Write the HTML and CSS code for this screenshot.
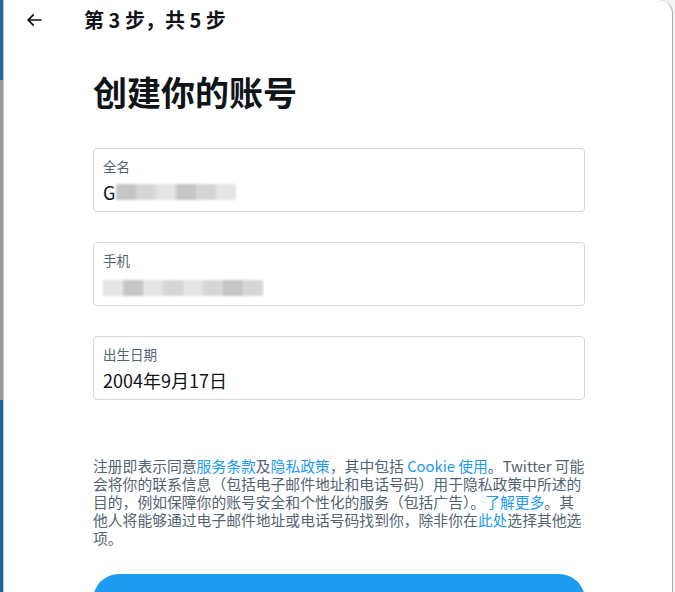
FILE: index.html
```html
<!DOCTYPE html>
<html lang="zh-CN">
<head>
<meta charset="UTF-8">
<meta name="viewport" content="width=device-width, initial-scale=1.0">
<title>创建你的账号</title>
<link rel="stylesheet" href="styles.css">
</head>
<body>
<div class="screen">
<div class="backdrop-strip"></div>
<div class="modal">
<div class="topbar">
<button class="back" aria-label="返回">
<svg viewBox="0 0 24 24" width="20" height="20"><path d="M7.414 13l5.043 5.04-1.414 1.42L3.586 12l7.457-7.46 1.414 1.42L7.414 11H21v2H7.414z"/></svg>
</button>
<div class="step">第 3 步，共 5 步</div>
</div>
<div class="content">
<h1>创建你的账号</h1>
<div class="field">
<div class="field-label">全名</div>
<div class="field-value">G<span class="blur blur-name"><i class="b1"></i><i class="b2"></i><i class="b3"></i><i class="b1"></i><i class="b2"></i><i class="b3"></i></span></div>
</div>
<div class="field">
<div class="field-label">手机</div>
<div class="field-value"><span class="blur blur-phone"><i class="b3"></i><i class="b1"></i><i class="b3"></i><i class="b2"></i><i class="b3"></i><i class="b2"></i><i class="b1"></i><i class="b2"></i></span></div>
</div>
<div class="field">
<div class="field-label">出生日期</div>
<div class="field-value">2004年9月17日</div>
</div>
<p class="legal">注册即表示同意<a href="#">服务条款</a>及<a href="#">隐私政策</a>，其中包括 <a href="#">Cookie 使用</a>。Twitter 可能<br>会将你的联系信息（包括电子邮件地址和电话号码）用于隐私政策中所述的<br>目的，例如保障你的账号安全和个性化的服务（包括广告）。<a href="#">了解更多</a>。其<br>他人将能够通过电子邮件地址或电话号码找到你，除非你在<a href="#">此处</a>选择其他选<br>项。</p>
<button class="next" aria-label="下一步"></button>
</div>
</div>
<div class="backdrop-right"></div>
</div>
</body>
</html>
```

FILE: styles.css
```css
html, body {
    margin: 0;
    height: 100%;
    overflow: hidden;
}

body {
    background: #f2f2f2;
    font-family: "Noto Sans CJK SC", "Noto Sans", sans-serif;
    color: #0f1419;
}

.screen {
    display: flex;
    height: 592px;
}

.backdrop-strip {
    width: 3px;
    flex-shrink: 0;
    background: linear-gradient(#1f6aa6 0, #1f6aa6 80px, #9a9a9a 80px, #9a9a9a 400px, #1d64a0 400px);
}

.modal {
    width: 668px;
    flex-shrink: 0;
    background: #fff;
    border-left: 1px solid #c4c4c4;
    border-right: 1px solid #a9a9a9;
    border-top-right-radius: 14px;
    overflow: hidden;
}

.backdrop-right {
    flex: 1;
    background: #f4f4f4;
}

.topbar {
    display: flex;
    align-items: center;
    height: 40px;
    padding-left: 20px;
}

.back {
    border: none;
    background: none;
    padding: 0;
    width: 20px;
    height: 20px;
    margin-right: 40px;
    cursor: pointer;
    display: flex;
}

.back svg {
    fill: #0f1419;
}

.step {
    font-size: 20px;
    font-weight: 700;
    line-height: 24px;
}

.content {
    margin-left: 89px;
    width: 492px;
}

h1 {
    margin: 31px 0 35px;
    font-size: 34px;
    line-height: 42px;
    font-weight: 700;
}

.field {
    height: 64px;
    box-sizing: border-box;
    border: 1px solid #cfd9de;
    border-radius: 4px;
    padding: 8px 9px 0;
    margin-bottom: 30px;
}

.field-label {
    font-size: 13.5px;
    line-height: 18px;
    color: #536471;
    margin-bottom: 5px;
}

.field-value {
    display: flex;
    align-items: center;
    font-size: 18px;
    line-height: 24px;
    height: 24px;
}

.blur {
    display: inline-flex;
    height: 16px;
    filter: blur(1px);
}

.blur i {
    display: block;
    width: 20px;
    height: 16px;
}

.blur-name {
    margin-left: 1px;
}

.blur-phone {
    margin-top: 4px;
}

.blur .b1 { background: #c6c6c6; }
.blur .b2 { background: #d6d6d6; }
.blur .b3 { background: #e4e4e4; }

.legal {
    width: 520px;
    margin: 57px 0 27px;
    font-size: 14.8px;
    line-height: 18px;
    color: #536471;
    white-space: nowrap;
}

.legal a {
    color: #1d9bf0;
    text-decoration: none;
}

.next {
    display: block;
    width: 492px;
    height: 52px;
    border: none;
    border-radius: 26px;
    background: #1d9bf0;
    cursor: pointer;
}
```
